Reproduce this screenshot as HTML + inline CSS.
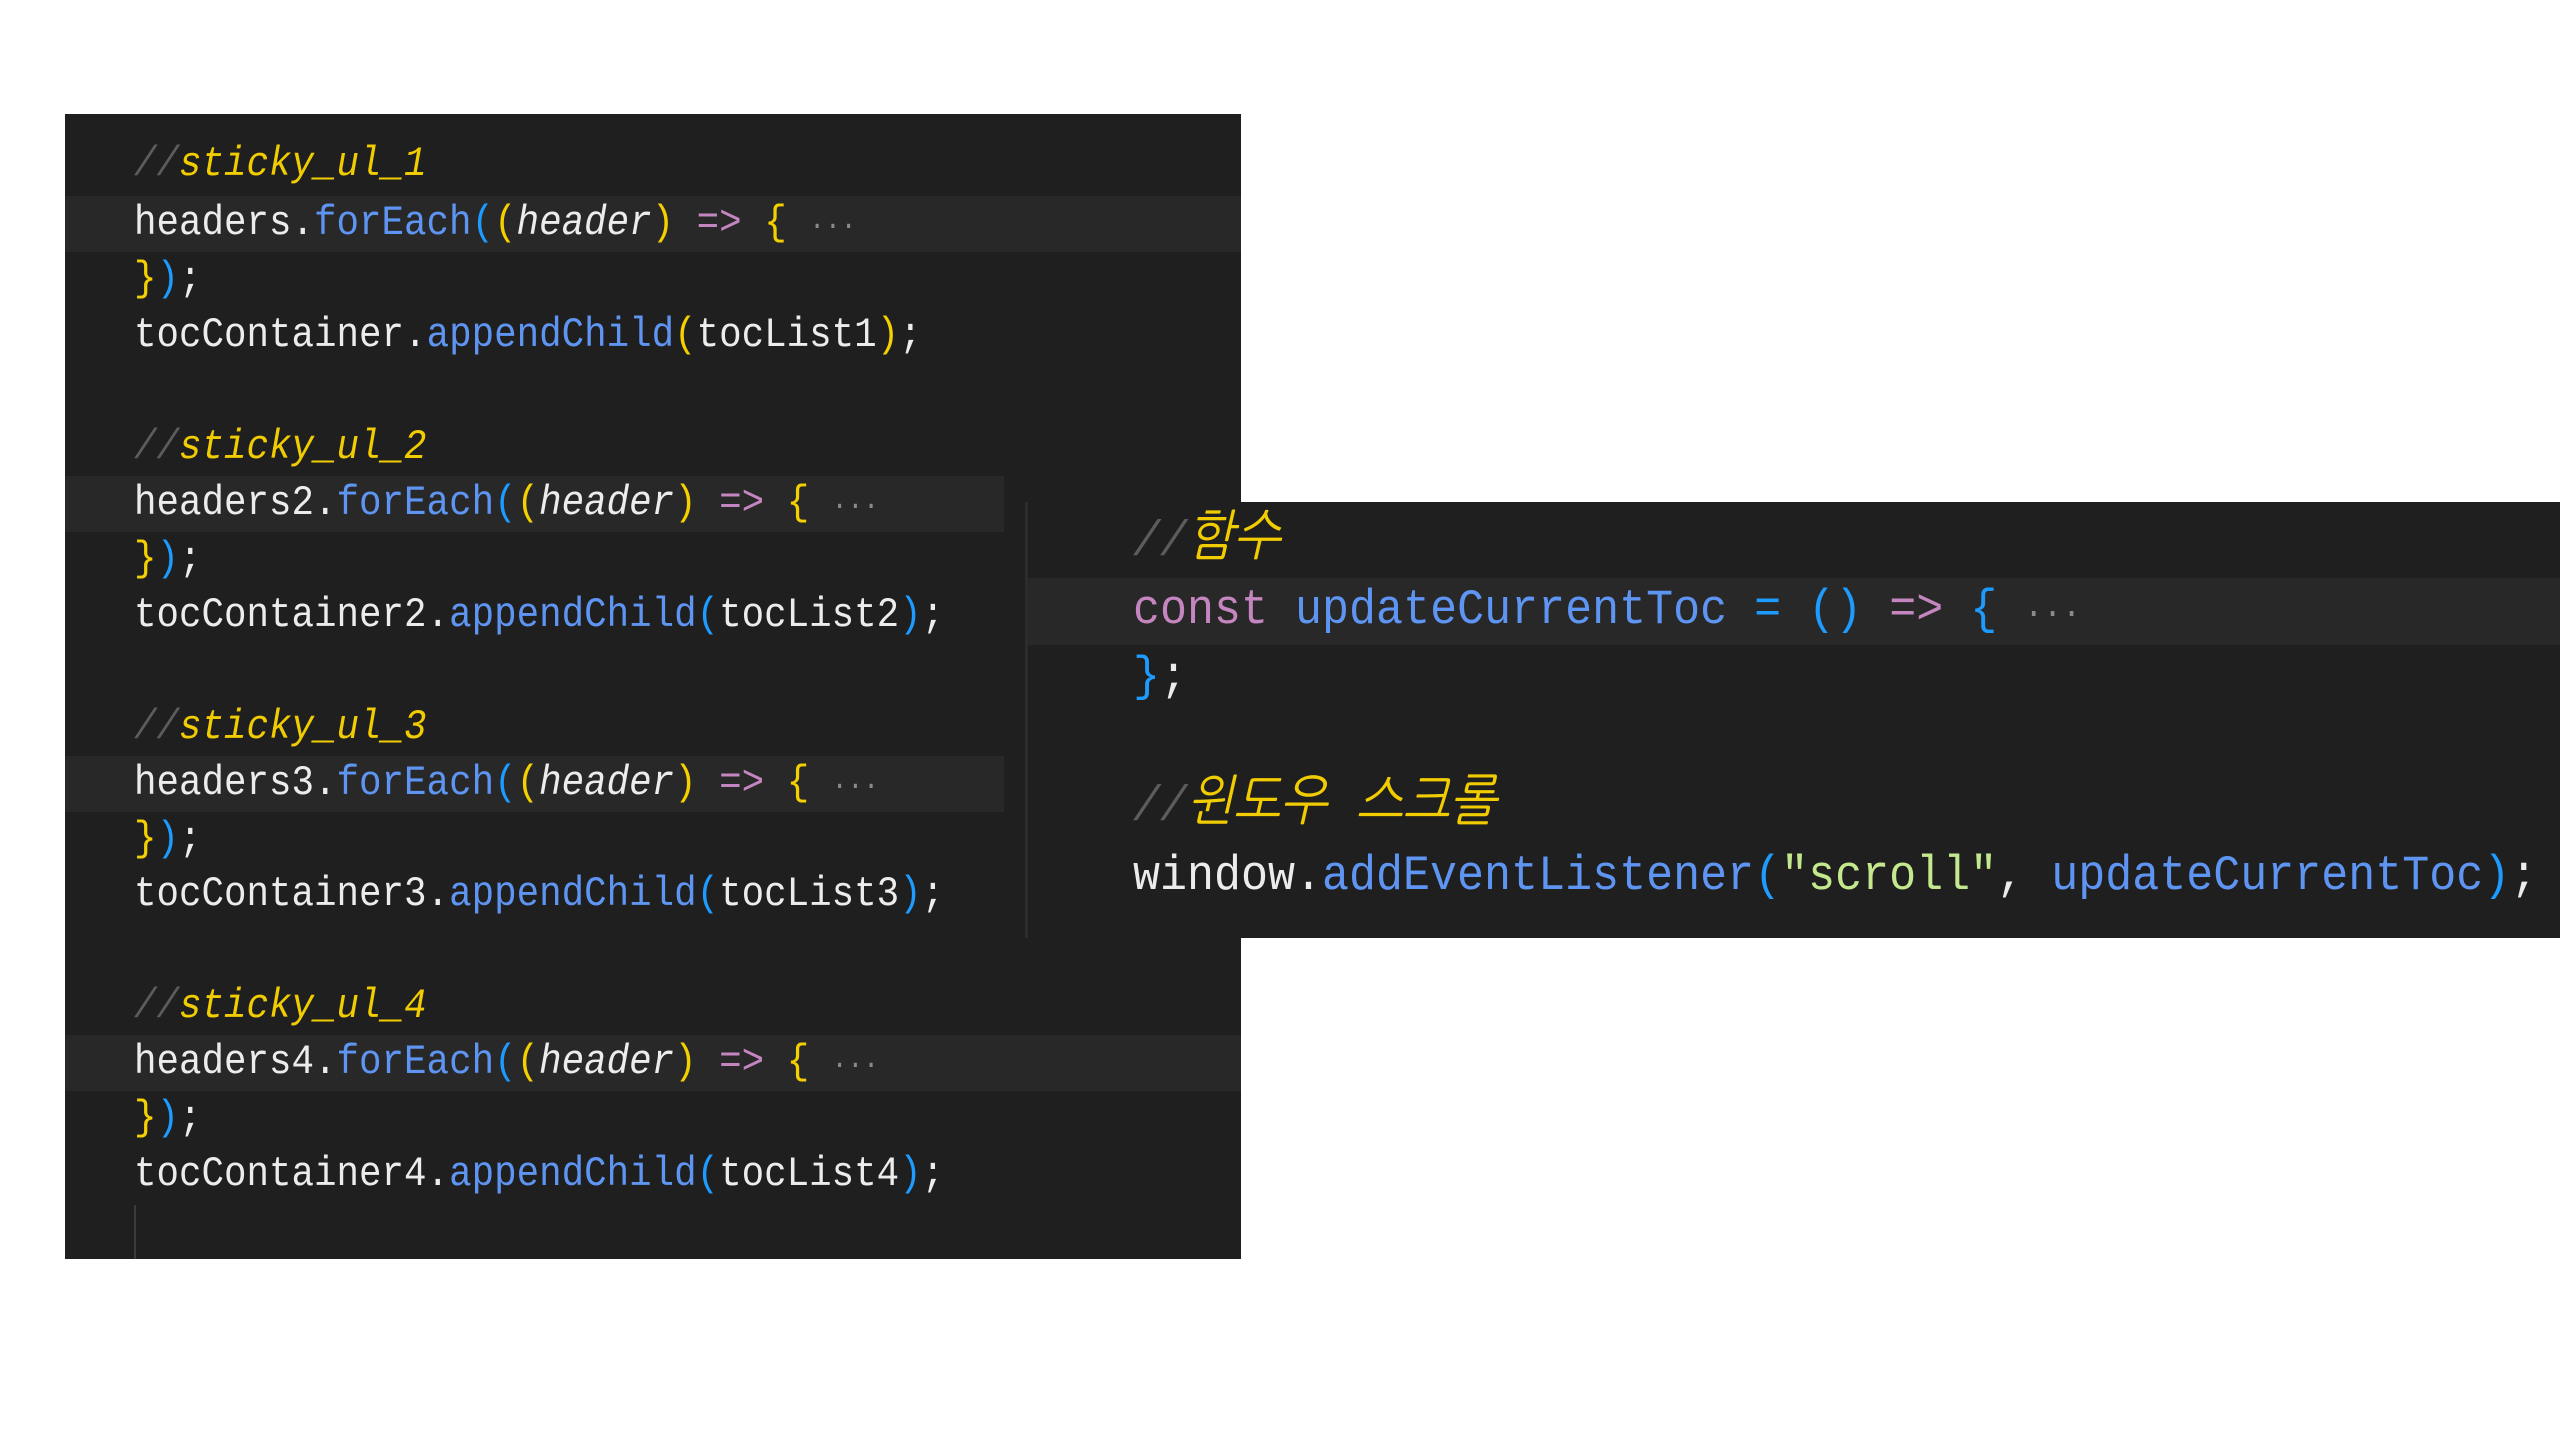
<!DOCTYPE html>
<html><head><meta charset="utf-8"><style>
body{margin:0;width:2560px;height:1440px;background:#fff;position:relative;overflow:hidden;font-family:"Liberation Mono","NanumGothic",monospace;}
.p{position:absolute;background:#1f1f1f;}
.l{position:absolute;white-space:pre;color:#ececec;transform:scaleY(1.1);transform-origin:left center;}
.L{font-size:37.5px;left:134px;height:56px;line-height:56px;}
.R{font-size:45px;left:1133px;height:68px;line-height:68px;}
.hl{position:absolute;background:#282828;}
.c{color:#5c5c5c;font-style:italic}
.cy{color:#f0cc00;font-style:italic}
.k{font-size:1.1em}
.m{color:#5f95f2}
.y{color:#f5d000}
.b{color:#1e9bff}
.a{color:#c586c0}
.i{font-style:italic}
.g{color:#c3e88d}
.d{color:#8a8a8a;font-size:0.7em}
</style></head><body>
<div class="p" style="left:65px;top:114px;width:1176px;height:1145px"></div>
<div class="hl" style="left:65px;top:196px;width:1176px;height:56px"></div>
<div class="hl" style="left:65px;top:476px;width:939px;height:56px"></div>
<div class="hl" style="left:65px;top:756px;width:939px;height:56px"></div>
<div class="hl" style="left:65px;top:1035px;width:1176px;height:56px"></div>
<div style="position:absolute;left:134px;top:1205px;width:2px;height:54px;background:#3a3a3a"></div>

<div class="l L" style="top:137px"><span class="c">//</span><span class="cy">sticky_ul_1</span></div>
<div class="l L" style="top:196px">headers.<span class="m">forEach</span><span class="b">(</span><span class="y">(</span><span class="i">header</span><span class="y">)</span> <span class="a">=&gt;</span> <span class="y">{</span> <span class="d">···</span></div>
<div class="l L" style="top:252px"><span class="y">}</span><span class="b">)</span>;</div>
<div class="l L" style="top:308px">tocContainer.<span class="m">appendChild</span><span class="y">(</span>tocList1<span class="y">)</span>;</div>

<div class="l L" style="top:420px"><span class="c">//</span><span class="cy">sticky_ul_2</span></div>
<div class="l L" style="top:476px">headers2.<span class="m">forEach</span><span class="b">(</span><span class="y">(</span><span class="i">header</span><span class="y">)</span> <span class="a">=&gt;</span> <span class="y">{</span> <span class="d">···</span></div>
<div class="l L" style="top:532px"><span class="y">}</span><span class="b">)</span>;</div>
<div class="l L" style="top:588px">tocContainer2.<span class="m">appendChild</span><span class="b">(</span>tocList2<span class="b">)</span>;</div>

<div class="l L" style="top:700px"><span class="c">//</span><span class="cy">sticky_ul_3</span></div>
<div class="l L" style="top:756px">headers3.<span class="m">forEach</span><span class="b">(</span><span class="y">(</span><span class="i">header</span><span class="y">)</span> <span class="a">=&gt;</span> <span class="y">{</span> <span class="d">···</span></div>
<div class="l L" style="top:812px"><span class="y">}</span><span class="b">)</span>;</div>
<div class="l L" style="top:867px">tocContainer3.<span class="m">appendChild</span><span class="b">(</span>tocList3<span class="b">)</span>;</div>

<div class="l L" style="top:979px"><span class="c">//</span><span class="cy">sticky_ul_4</span></div>
<div class="l L" style="top:1035px">headers4.<span class="m">forEach</span><span class="b">(</span><span class="y">(</span><span class="i">header</span><span class="y">)</span> <span class="a">=&gt;</span> <span class="y">{</span> <span class="d">···</span></div>
<div class="l L" style="top:1091px"><span class="y">}</span><span class="b">)</span>;</div>
<div class="l L" style="top:1147px">tocContainer4.<span class="m">appendChild</span><span class="b">(</span>tocList4<span class="b">)</span>;</div>

<div class="p" style="left:1025px;top:502px;width:1535px;height:436px"></div>
<div style="position:absolute;left:1025px;top:502px;width:3px;height:436px;background:#2c2c2c"></div>
<div class="hl" style="left:1028px;top:578px;width:1532px;height:67px"></div>
<div class="l R" style="top:506px"><span class="c">//</span><span class="cy k">함수</span></div>
<div class="l R" style="top:577px"><span class="a">const</span> <span class="m">updateCurrentToc</span> <span class="b">=</span> <span class="b">()</span> <span class="a">=&gt;</span> <span class="b">{</span> <span class="d">···</span></div>
<div class="l R" style="top:644px"><span class="b">}</span>;</div>
<div class="l R" style="top:771px"><span class="c">//</span><span class="cy k">윈도우 스크롤</span></div>
<div class="l R" style="top:843px">window.<span class="m">addEventListener</span><span class="b">(</span><span class="g">"scroll"</span>, <span class="m">updateCurrentToc</span><span class="b">)</span>;</div>
</body></html>
